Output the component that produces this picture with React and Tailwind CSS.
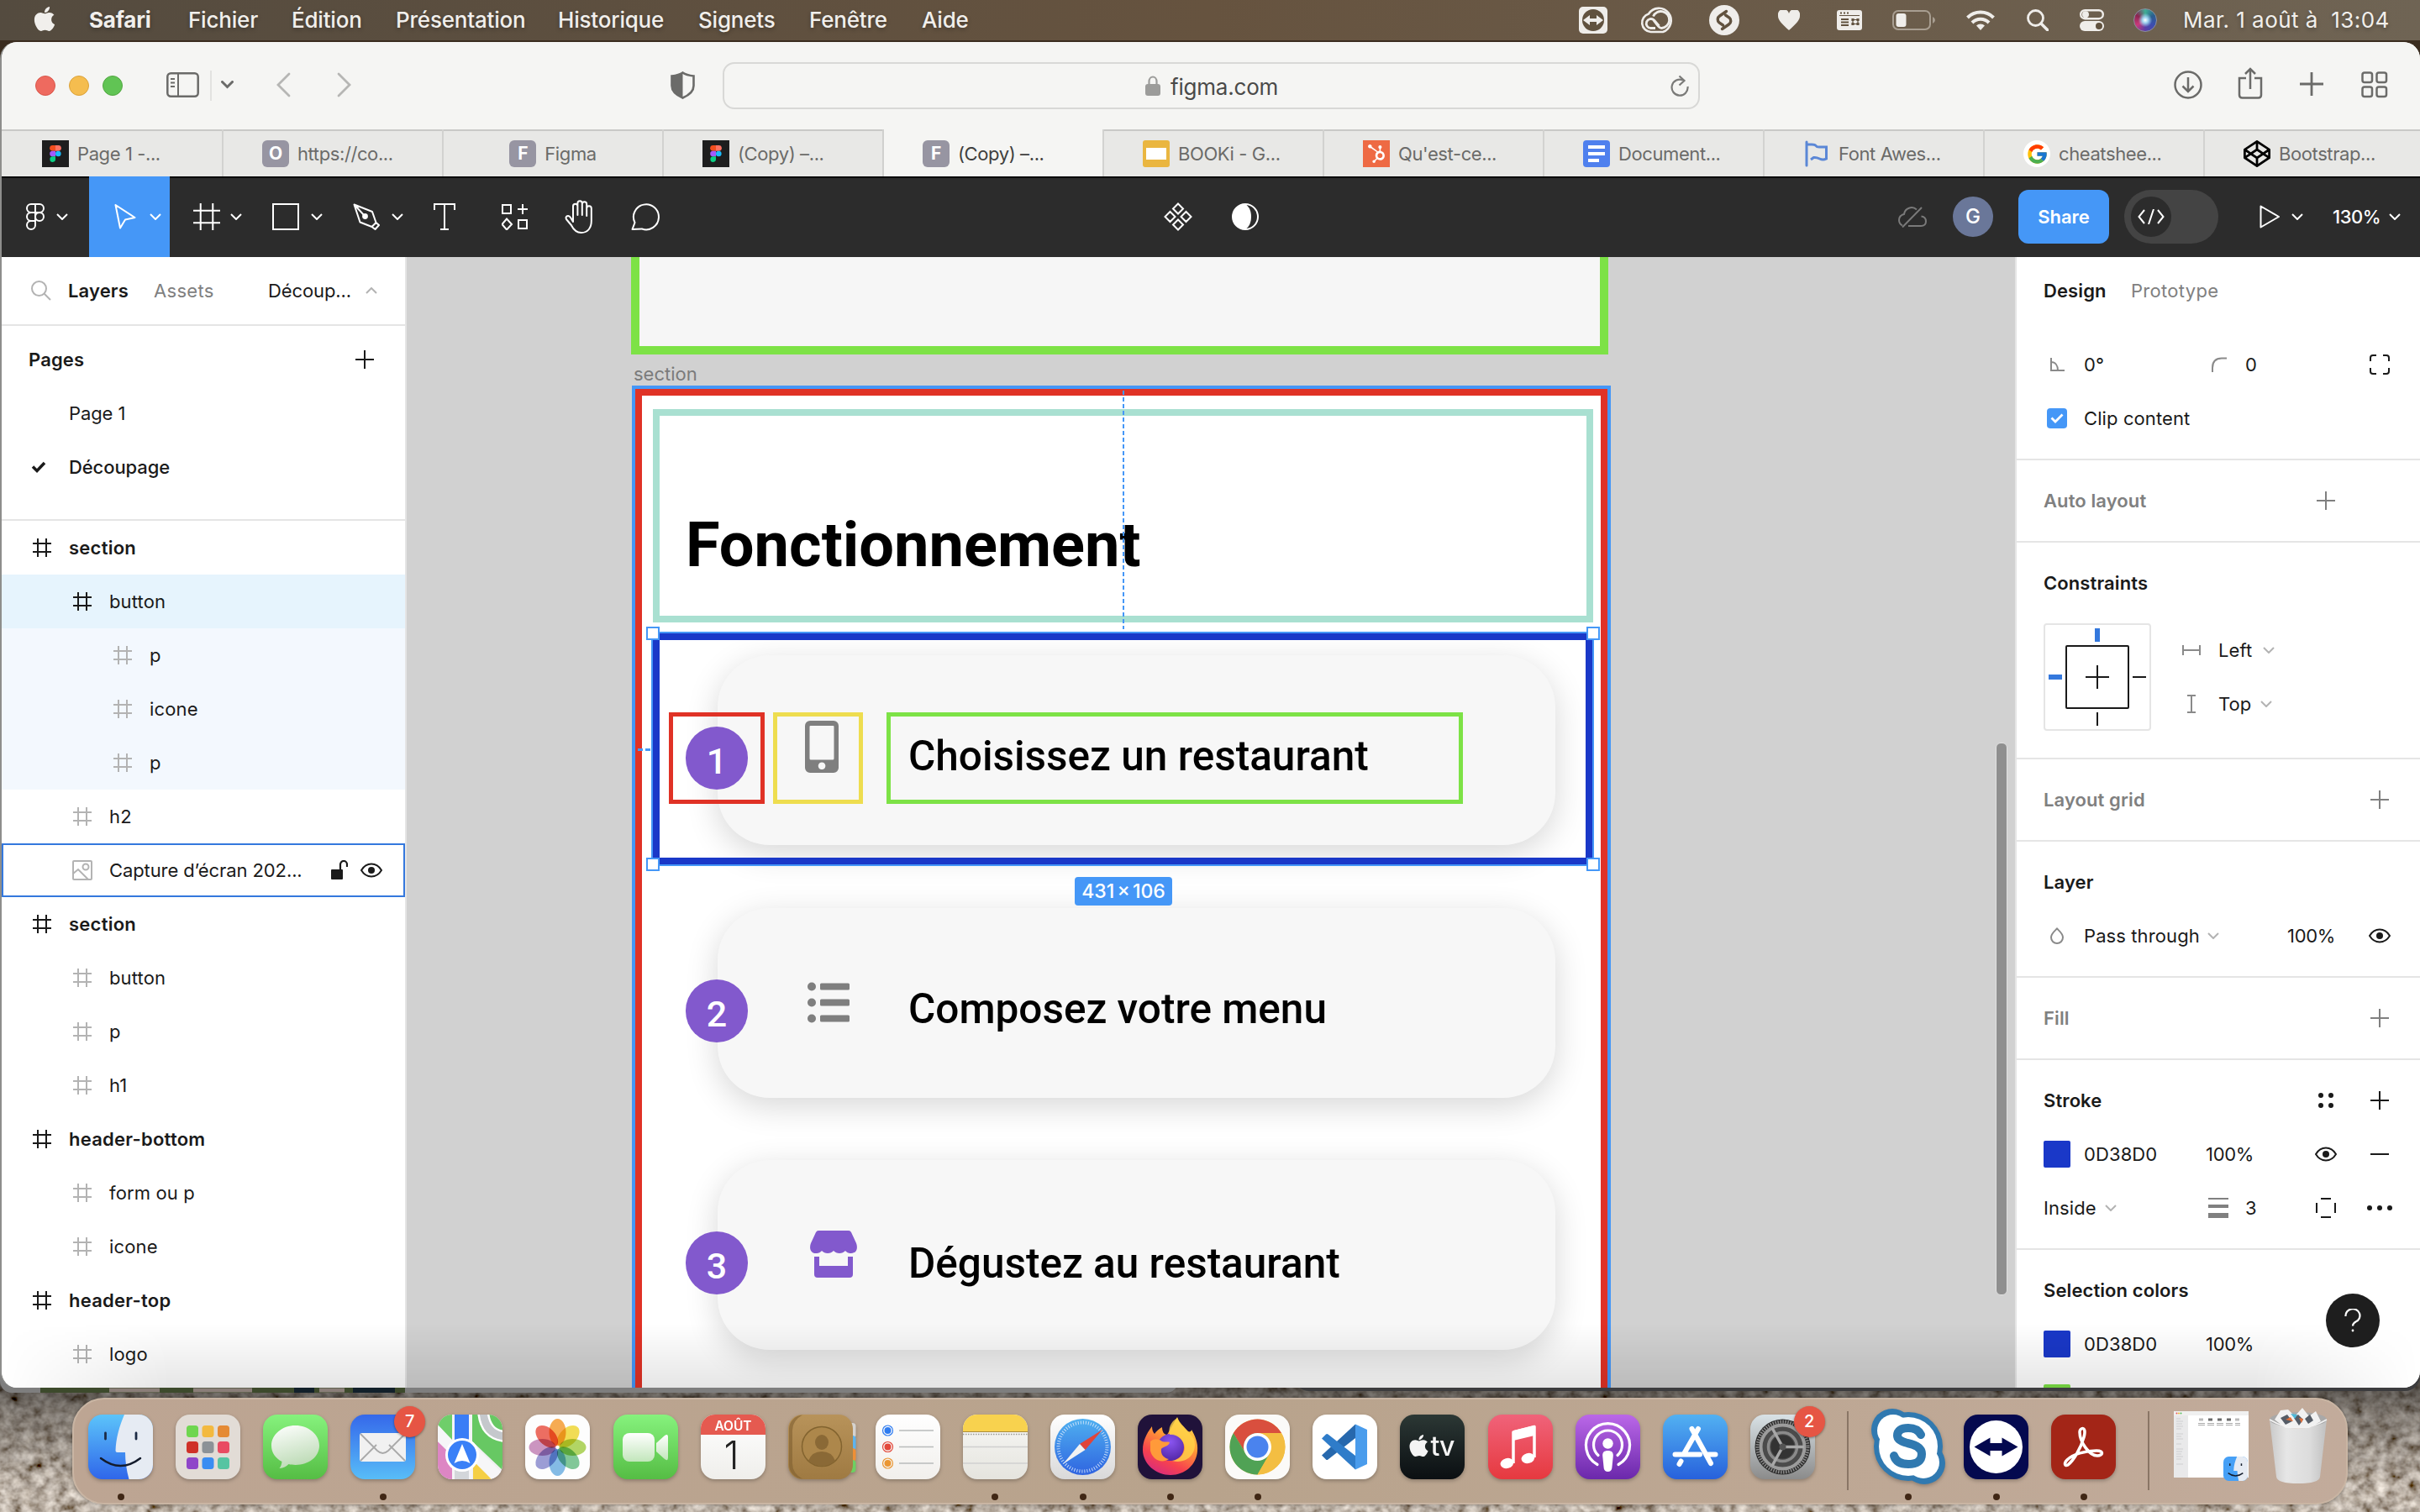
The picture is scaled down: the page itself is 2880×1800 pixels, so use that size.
import React from "react";
import { FaApple, FaCodepen, FaHubspot } from "react-icons/fa";
import { FcGoogle } from "react-icons/fc";

/* ---------- small shared glyphs ---------- */

const Chevron = ({ className = "", color = "#fff", up = false, w = 14 }) => (
  <svg width={w} height="8" viewBox="0 0 14 8" fill="none" className={`shrink-0 ${className}`}>
    <path d={up ? "M1 7l6-6 6 6" : "M1 1l6 6 6-6"} stroke={color} strokeWidth="2" />
  </svg>
);

const Plus = ({ color = "#1a1a1a", className = "" }) => (
  <svg width="22" height="22" viewBox="0 0 22 22" className={`shrink-0 ${className}`}>
    <path d="M11 0v22M0 11h22" stroke={color} strokeWidth="2" />
  </svg>
);

const Eye = ({ className = "" }) => (
  <svg width="26" height="18" viewBox="0 0 26 18" fill="none" className={`shrink-0 ${className}`}>
    <path d="M1 9C4 4 8 1.500 13 1.500S22 4 25 9c-3 5-7 7.500-12 7.500S4 14 1 9z" stroke="#1a1a1a" strokeWidth="2" />
    <circle cx="13" cy="9" r="4" fill="#1a1a1a" />
  </svg>
);

const FrameIcon = ({ color, size = 22, className = "" }) => (
  <svg width={size} height={size} viewBox="0 0 22 22" className={`shrink-0 ${className}`}>
    <path d="M6 0v22M16 0v22M0 6h22M0 16h22" stroke={color} strokeWidth="2" />
  </svg>
);

/* ---------- macOS menu bar ---------- */

const menus = [
  ["Fichier", "w-[123px]"],
  ["Édition", "w-[124px]"],
  ["Présentation", "w-[193px]"],
  ["Historique", "w-[167px]"],
  ["Signets", "w-[132px]"],
  ["Fenêtre", "w-[134px]"],
  ["Aide", "w-[80px]"],
];

function MenuBar() {
  return (
    <div className="flex h-[48px] items-center bg-linear-to-r from-[#544b3f] via-[#66533f] to-[#6f6454] text-[26px] font-medium tracking-[-0.2px] text-[#f1efec] [text-shadow:0_2px_5px_rgba(0,0,0,0.3)] [&>*]:shrink-0">
      <FaApple className="ml-[38px] mb-[4px] h-[33px] w-[30px]" />
      <span className="ml-[38px] -mt-[2px] w-[118px] font-bold">Safari</span>
      {menus.map(([m, w]) => (
        <span key={m} className={`${w} -mt-[2px] whitespace-nowrap`}>{m}</span>
      ))}
      <div className="flex-1" />
      <svg width="34" height="34" viewBox="0 0 34 34" className="mr-[39px]">
        <rect x="0" y="1" width="34" height="32" rx="5" fill="#efedea" />
        <circle cx="17" cy="17" r="13" fill="#61523f" />
        <path d="M5 17l8-6v4h8v-4l8 6-8 6v-4h-8v4z" fill="#efedea" />
      </svg>
      <svg width="40" height="32" viewBox="0 0 40 32" className="mr-[42px]" fill="none" stroke="#efedea">
        <path d="M12.500 30A11 11 0 0 1 10 8.500 14.500 14.500 0 1 1 27 30z" strokeWidth="2.600" />
        <path d="M18 25.500h-5.500a5.500 5.500 0 1 1 4-9.500l6 7M15.500 11.500a10 10 0 1 1 10 14c-2.500 0-4-2-5.500-4l-5-6.500" strokeWidth="2.800" />
      </svg>
      <svg width="36" height="36" viewBox="0 0 36 36" className="mr-[46px]">
        <circle cx="18" cy="18" r="18" fill="#efedea" />
        <path d="M20.500 7.500l-8 5.500a5 5 0 0 0-.5 8l4.500 3M15.500 28.500l8-5.500a5 5 0 0 0 .5-8l-4.500-3" fill="none" stroke="#61523f" strokeWidth="3.400" strokeLinecap="round" />
      </svg>
      <svg width="26" height="24" viewBox="0 0 26 24" className="mr-[44px]">
        <path d="M13 24C5 17 0 12 0 7a6.500 6.500 0 0 1 13-3 6.500 6.500 0 0 1 13 3c0 5-5 10-13 17z" fill="#efedea" />
      </svg>
      <svg width="30" height="24" viewBox="0 0 30 24" className="mr-[36px]">
        <rect width="30" height="24" rx="3" fill="#efedea" />
        <path d="M4 3.500h2M8 3.500h2M12 3.500h2M5 11h9M5 14.500h9M5 18h9" stroke="#61523f" strokeWidth="1.800" />
        <path d="M3 6.500h24" stroke="#61523f" strokeWidth="1" />
        <path d="M19 11.500h6v5h-6zM18 10.500h2v2h-2zM24 10.500h2v2h-2zM18 15.500h2v2h-2zM24 15.500h2v2h-2z" fill="none" stroke="#61523f" strokeWidth="1.200" />
      </svg>
      <svg width="52" height="24" viewBox="0 0 52 24" className="mr-[36px]">
        <rect x="1" y="1" width="44" height="22" rx="6" fill="none" stroke="#a89e91" strokeWidth="2" />
        <rect x="4.500" y="4" width="12" height="16" rx="3" fill="#efedea" />
        <path d="M48 8v8q3-1.500 3-4t-3-4z" fill="#a89e91" />
      </svg>
      <svg width="34" height="24" viewBox="0 0 34 24" className="mr-[38px]" fill="none" stroke="#efedea" strokeWidth="4">
        <path d="M1.500 9a22 22 0 0 1 31 0M7 15a14 14 0 0 1 20 0" />
        <path d="M17 24l-5-5.500a7 7 0 0 1 10 0z" fill="#efedea" stroke="none" />
      </svg>
      <svg width="26" height="26" viewBox="0 0 26 26" className="mr-[37px]" fill="none" stroke="#efedea" strokeWidth="2.800">
        <circle cx="10.500" cy="10.500" r="9" />
        <path d="M17 17l8 8" strokeWidth="3.500" strokeLinecap="round" />
      </svg>
      <svg width="30" height="26" viewBox="0 0 30 26" className="mr-[34px]">
        <rect x="1.200" y="1.200" width="26.600" height="10" rx="5" fill="none" stroke="#efedea" strokeWidth="2.400" />
        <circle cx="7" cy="6.200" r="4" fill="#efedea" />
        <rect y="14" width="29" height="12" rx="6" fill="#efedea" />
        <circle cx="23" cy="20" r="4" fill="#61523f" />
      </svg>
      <span className="mr-[31px] h-[28px] w-[28px] rounded-full border border-[#8a8fa0] bg-[radial-gradient(circle_at_50%_50%,#fff_0,#9fd4f0_18%,transparent_45%),conic-gradient(#3fae95,#2b5f8f,#3b4fb0,#5a3ea8,#c93a7a,#8a2550,#3fae95)]" />
      <span className="-mt-[2px] mr-[36px] w-[246px] whitespace-pre font-normal tracking-[0.450px]">Mar. 1 août à  13:04</span>
    </div>
  );
}

/* ---------- Safari chrome ---------- */

function SafariToolbar() {
  return (
    <div className="flex h-[104px] shrink-0 items-center bg-[#f5f5f3] [&>*]:shrink-0">
      <span className="ml-[40px] h-[24px] w-[24px] rounded-full border border-[#d9574b] bg-[#ee6a5f]" />
      <span className="ml-[16px] h-[24px] w-[24px] rounded-full border border-[#dba23a] bg-[#f5bd4f]" />
      <span className="ml-[16px] h-[24px] w-[24px] rounded-full border border-[#53a742] bg-[#61c454]" />
      <svg width="39" height="30" viewBox="0 0 39 30" className="-mt-[2px] ml-[52px]" fill="none" stroke="#6b6b69" strokeWidth="2.500">
        <rect x="1.300" y="1.300" width="36.400" height="27.400" rx="4" />
        <path d="M14 1v28M5 8h5M5 12.500h5M5 17h5" strokeWidth="2" />
      </svg>
      <span className="ml-[13px] h-[36px] w-[2px] bg-[#e2e2e0]" />
      <svg width="15" height="10" viewBox="0 0 15 10" className="-mt-[2px] ml-[11px]" fill="none"><path d="M1.500 1.500l6 6 6-6" stroke="#6b6b69" strokeWidth="3" strokeLinecap="round" /></svg>
      <svg width="18" height="30" viewBox="0 0 18 30" className="-mt-[2px] ml-[50px]" fill="none"><path d="M16 2L3 15l13 13" stroke="#b6b6b4" strokeWidth="2.800" strokeLinecap="round" /></svg>
      <svg width="18" height="30" viewBox="0 0 18 30" className="-mt-[2px] ml-[55px]" fill="none"><path d="M2 2l13 13L2 28" stroke="#b6b6b4" strokeWidth="2.800" strokeLinecap="round" /></svg>
      <svg width="29" height="33" viewBox="0 0 29 33" className="-mt-[2px] ml-[379px]">
        <path d="M14.500 1.500C18 4 23 5 27.500 5.500V17c0 7-6 11.500-13 14.500C7.500 28.500 1.500 24 1.500 17V5.500C6 5 11 4 14.500 1.500z" fill="none" stroke="#6b6b69" strokeWidth="2.600" />
        <path d="M14.500 1.500C11 4 6 5 1.500 5.500V17c0 7 6 11.500 13 14.500z" fill="#6b6b69" />
      </svg>
      <div className="ml-[33px] flex h-[56px] w-[1163px] items-center rounded-[14px] border-2 border-[#d8d8d6] text-[26px] text-[#4a4a49]">
        <svg width="18" height="24" viewBox="0 0 18 24" className="ml-[501px]">
          <path d="M4.500 11V7a4.500 5.500 0 0 1 9 0v4" fill="none" stroke="#9c9c9a" strokeWidth="2.200" />
          <rect y="10" width="18" height="14" rx="3" fill="#9c9c9a" />
        </svg>
        <span className="ml-[12px] mt-[2px] flex-1 tracking-[-0.2px]">figma.com</span>
        <svg width="22" height="26" viewBox="0 0 22 26" className="mr-[11px]" fill="none" stroke="#7a7a78" strokeWidth="2.200">
          <path d="M15 6.500A9.500 9.500 0 1 0 20.500 14" />
          <path d="M10.500 1.500l6 5.500-6 5.500" />
        </svg>
      </div>
      <svg width="34" height="34" viewBox="0 0 34 34" className="-mt-[2px] ml-[564px]" fill="none" stroke="#6b6b69" strokeWidth="2.500">
        <circle cx="17" cy="17" r="15.500" /><path d="M17 8v17M10.500 18.500L17 25l6.500-6.500" />
      </svg>
      <svg width="30" height="38" viewBox="0 0 30 38" className="-mt-[6px] ml-[42px]" fill="none" stroke="#6b6b69" strokeWidth="2.500">
        <path d="M10 13H2v20q0 3.500 3.500 3.500h19Q28 36.500 28 33V13h-8M15 26V2M9 8l6-6 6 6" />
      </svg>
      <svg width="28" height="28" viewBox="0 0 28 28" className="-mt-[4px] ml-[44px]" stroke="#6b6b69" strokeWidth="2.800"><path d="M14 0v28M0 14h28" /></svg>
      <svg width="32" height="32" viewBox="0 0 32 32" className="-mt-[2px] ml-[45px]" fill="none" stroke="#6b6b69" strokeWidth="2.500">
        <rect x="1.500" y="1.500" width="11.500" height="11.500" rx="2.500" /><rect x="18.500" y="1.500" width="11.500" height="11.500" rx="2.500" />
        <rect x="1.500" y="18.500" width="11.500" height="11.500" rx="2.500" /><rect x="18.500" y="18.500" width="11.500" height="11.500" rx="2.500" />
      </svg>
    </div>
  );
}

const FigmaFavicon = () => (
  <svg width="32" height="32" viewBox="0 0 32 32" className="shrink-0">
    <rect width="32" height="32" fill="#1e1e1e" />
    <path d="M16 6h-3.500a3.300 3.300 0 0 0 0 6.700H16z" fill="#f24e1e" />
    <path d="M16 6h3.500a3.300 3.300 0 0 1 0 6.700H16z" fill="#ff7262" />
    <path d="M16 12.700h-3.500a3.300 3.300 0 0 0 0 6.600H16z" fill="#a259ff" />
    <circle cx="19.300" cy="16" r="3.300" fill="#1abcfe" />
    <path d="M16 19.300h-3.500a3.300 3.300 0 1 0 3.500 3.300z" fill="#0acf83" />
  </svg>
);
const LetterFavicon = ({ children }) => (
  <span className="flex h-[32px] w-[32px] shrink-0 items-center justify-center rounded-[6px] bg-[#9795a2] text-[21px] font-bold text-white">{children}</span>
);
const SlidesFavicon = () => (
  <svg width="32" height="32" viewBox="0 0 32 32" className="shrink-0"><rect width="32" height="32" rx="3" fill="#eab640" /><rect x="4" y="9" width="24" height="14" fill="#fff" /></svg>
);
const DocsFavicon = () => (
  <svg width="32" height="32" viewBox="0 0 32 32" className="shrink-0"><rect width="32" height="32" rx="4" fill="#4f80ee" /><path d="M6 8h20M6 16h20M6 24h13" stroke="#fff" strokeWidth="4" /></svg>
);
const FlagFavicon = () => (
  <svg width="32" height="32" viewBox="0 0 32 32" className="shrink-0" fill="none" stroke="#5b87d6" strokeWidth="3">
    <path d="M4 2v28" strokeLinecap="round" /><path d="M4 5h6q4 0 5 1.500T19 8h8.500v14q-4 2-8 0t-7-1.500L9 23" />
  </svg>
);

const tabs = [
  { t: "Page 1 -...", i: <FigmaFavicon /> },
  { t: "https://co...", i: <LetterFavicon>O</LetterFavicon> },
  { t: "Figma", i: <LetterFavicon>F</LetterFavicon>, center: true },
  { t: "(Copy) –...", i: <FigmaFavicon /> },
  { t: "(Copy) –...", i: <LetterFavicon>F</LetterFavicon>, active: true },
  { t: "BOOKi - G...", i: <SlidesFavicon /> },
  { t: "Qu'est-ce...", i: <span className="flex h-[32px] w-[32px] shrink-0 items-center justify-center bg-[#ee6a44]"><FaHubspot className="h-[22px] w-[22px] text-white" /></span> },
  { t: "Document...", i: <DocsFavicon /> },
  { t: "Font Awes...", i: <FlagFavicon /> },
  { t: "cheatshee...", i: <span className="flex h-[32px] w-[32px] shrink-0 items-center justify-center rounded-full bg-white"><FcGoogle className="h-[27px] w-[27px]" /></span> },
  { t: "Bootstrap...", i: <FaCodepen className="h-[32px] w-[32px] shrink-0 text-black" /> },
];

function TabBar() {
  return (
    <div className="-mr-[4px] grid h-[56px] shrink-0 grid-cols-11 bg-[#e8e8e6] text-[22px] tracking-[-0.4px] text-[#6b6b69]">
      {tabs.map((tab, i) => (
        <div
          key={i}
          className={`flex min-w-0 items-center gap-[10px] border-l-2 pt-[2px] ${tab.center ? "justify-center" : "pl-[46px] first:pl-[48px]"} ${
            tab.active ? "border-[#d0d0ce] bg-[#f5f5f3] text-[#3f3f3e]" : "border-[#d2d2d0] shadow-[inset_0_2px_0_#c9c9c7] first:border-l-0"
          }`}
        >
          {tab.i}
          <span className="whitespace-nowrap">{tab.t}</span>
        </div>
      ))}
    </div>
  );
}

/* ---------- Figma toolbar ---------- */

const S = ({ w, h, children, className = "", sw = 2 }) => (
  <svg width={w} height={h} viewBox={`0 0 ${w} ${h}`} fill="none" stroke="#fff" strokeWidth={sw} className={`shrink-0 ${className}`}>{children}</svg>
);

function FigmaToolbar() {
  return (
    <div className="flex h-[96px] shrink-0 items-center bg-[#2c2c2c] text-[22px] text-white shadow-[inset_0_2px_0_#000]">
      <S w={24} h={32} className="ml-[28px]">
        <path d="M12 1H7a5 5 0 0 0 0 10h10a5 5 0 0 0 0-10h-5zM12 1v25M12 11H7a5 5 0 0 0 0 10h5M12 21H7a5 5 0 1 0 5 5z" /><circle cx="17" cy="16" r="5" />
      </S>
      <Chevron className="ml-[13px]" />
      <div className="ml-[25px] flex h-[96px] w-[96px] shrink-0 items-center bg-[#4597f7]">
        <S w={27} h={32} className="ml-[30px]"><path d="M1.500 2l23 15-11.500 2.500L7 29.500z" strokeLinejoin="round" /></S>
        <Chevron className="ml-[15px]" />
      </div>
      <FrameIcon color="#fff" size={32} className="ml-[28px] [&_path]:[stroke-width:1.400]" />
      <Chevron className="ml-[12px]" />
      <S w={32} h={32} className="ml-[36px]"><rect x="1" y="1" width="30" height="30" /></S>
      <Chevron className="ml-[14px]" />
      <S w={32} h={32} className="ml-[36px]">
        <path d="M1.500 1.500l7 21 14 5.500 5-5-4.500-13zM1.500 1.500l12 13M22.500 28l4 3 4.500-5-3.500-3" strokeLinejoin="round" /><circle cx="14.500" cy="15.500" r="2.400" fill="#fff" />
      </S>
      <Chevron className="ml-[14px]" />
      <S w={26} h={32} className="ml-[36px]"><path d="M1 8V1h24v7M13 1v30M8 31h10" /></S>
      <S w={32} h={32} className="ml-[55px]">
        <rect x="1" y="2" width="10" height="10" /><rect x="20" y="20" width="10" height="10" /><path d="M25 1v12M19 7h12M6 18.500l6 6.500-6 6.500L0.500 25z" />
      </S>
      <S w={36} h={40} className="ml-[43px]">
        <path d="M10 22V7.500a2.700 2.700 0 0 1 5.400 0V18 4a2.700 2.700 0 0 1 5.400 0v14V5a2.700 2.700 0 0 1 5.400 0v14V10a2.700 2.700 0 0 1 5.600 0v15c0 8-4 14-12 14-7 0-10-5-12-9L2 23c-2-4 3-5.500 5-2l3 5z" strokeLinejoin="round" />
      </S>
      <S w={36} h={33} className="ml-[43px]"><path d="M1.500 31l3-8A15 15 0 1 1 13 30.500z" strokeLinejoin="round" /></S>
      <S w={34} h={34} className="ml-[598px]">
        <path d="M17 1.500l6 6-6 6-6-6zM17 20.500l6 6-6 6-6-6zM7.500 11l6 6-6 6-6-6zM26.500 11l6 6-6 6-6-6z" />
      </S>
      <S w={32} h={32} className="ml-[47px]"><circle cx="16" cy="16" r="15" /><path d="M16 1a15 15 0 0 0 0 30c5-3 7-9 7-15s-2-12-7-15z" fill="#fff" stroke="none" /></S>
      <div className="flex-1" />
      <svg width="34" height="26" viewBox="0 0 34 26" fill="none" stroke="#7a7a7a" strokeWidth="2" className="shrink-0">
        <path d="M22 4.500A9 9 0 0 0 7 10C3 11 1 13.500 1 17c0 2.500 1.500 5 4 6.500M12 24h15c4 0 6-2.500 6-5.500S31 13 27.500 12.500M5 25.500L28 2" />
      </svg>
      <span className="ml-[31px] flex h-[48px] w-[48px] shrink-0 items-center justify-center rounded-full bg-[#6a7799] text-[24px] font-medium">G</span>
      <span className="ml-[30px] flex h-[64px] w-[108px] shrink-0 items-center justify-center rounded-[12px] bg-[#4597f7] font-semibold">Share</span>
      <span className="ml-[18px] flex h-[64px] w-[112px] shrink-0 items-center rounded-full bg-[#444]">
        <span className="ml-[8px] flex h-[48px] w-[48px] items-center justify-center rounded-full bg-[#2c2c2c]">
          <S w={32} h={18}><path d="M8 1L1.500 9 8 17M24 1l6.500 8L24 17M19 0l-6 18" /></S>
        </span>
      </span>
      <S w={25} h={28} className="ml-[49px]"><path d="M1.500 1.500L23 14 1.500 26.500z" strokeLinejoin="round" /></S>
      <Chevron className="ml-[13px]" />
      <span className="ml-[35px] w-[58px] shrink-0 font-medium tracking-[-0.5px]">130%</span>
      <Chevron className="ml-[9px] mr-[23px]" />
    </div>
  );
}

/* ---------- layers panel ---------- */

const layers = [
  { n: "section", d: 0 },
  { n: "button", d: 1, dark: true, bg: "bg-[#e6f4fd]" },
  { n: "p", d: 2, bg: "bg-[#f3f8fe]" },
  { n: "icone", d: 2, bg: "bg-[#f3f8fe]" },
  { n: "p", d: 2, bg: "bg-[#f3f8fe]" },
  { n: "h2", d: 1 },
  { n: "Capture d’écran 202...", d: 1, hover: true },
  { n: "section", d: 0 },
  { n: "button", d: 1 },
  { n: "p", d: 1 },
  { n: "h1", d: 1 },
  { n: "header-bottom", d: 0 },
  { n: "form ou p", d: 1 },
  { n: "icone", d: 1 },
  { n: "header-top", d: 0 },
  { n: "logo", d: 1 },
];
const indent = ["pl-[37px]", "pl-[85px]", "pl-[133px]"];

function LeftPanel() {
  return (
    <div className="flex w-[482px] shrink-0 flex-col overflow-hidden border-r-2 border-[#e5e5e5] bg-white text-[22px] tracking-[0.15px] text-[#1a1a1a]">
      <div className="flex h-[82px] shrink-0 items-center border-b-2 border-[#e5e5e5]">
        <svg width="24" height="24" viewBox="0 0 24 24" fill="none" stroke="#b3b3b3" strokeWidth="2" className="ml-[35px]"><circle cx="9.500" cy="9.500" r="8.500" /><path d="M15.500 15.500l7.500 7.500" /></svg>
        <span className="ml-[20px] w-[102px] font-semibold">Layers</span>
        <span className="w-[136px] tracking-[0.3px] text-[#808080]">Assets</span>
        <span className="tracking-[-0.1px]">Découp...</span>
        <Chevron up color="#b3b3b3" className="ml-[17px]" />
      </div>
      <div className="flex h-[232px] shrink-0 flex-col border-b-2 border-[#e5e5e5] pt-[8px]">
        <div className="flex h-[64px] items-center justify-between pl-[32px] pr-[37px]">
          <span className="font-semibold">Pages</span>
          <Plus />
        </div>
        <div className="flex h-[64px] items-center pl-[80px] tracking-[-0.1px]">Page 1</div>
        <div className="flex h-[64px] items-center pl-[35px]">
          <svg width="18" height="14" viewBox="0 0 18 14" fill="none" stroke="#1a1a1a" strokeWidth="3.500"><path d="M2 6.500l5 5L16 2" /></svg>
          <span className="ml-[27px] font-medium tracking-[-0.1px]">Découpage</span>
        </div>
      </div>
      {layers.map((l, i) => (
        <div
          key={i}
          className={`flex h-[64px] shrink-0 items-center ${indent[l.d]} ${l.bg || ""} ${l.d === 0 ? "font-semibold tracking-[0.25px]" : ""} ${l.hover ? "tracking-[-0.1px] shadow-[inset_0_0_0_2px_#3478dd]" : ""}`}
        >
          {l.hover ? (
            <svg width="24" height="24" viewBox="0 0 24 24" fill="none" stroke="#b3b3b3" strokeWidth="2" className="-ml-px mr-[20px] shrink-0"><rect x="1" y="1" width="22" height="22" rx="1" /><circle cx="16" cy="8" r="3.500" /><path d="M1 16l6-5 12 12" /></svg>
          ) : (
            <FrameIcon color={l.d === 0 || l.dark ? "#1a1a1a" : "#b3b3b3"} className="mr-[21px]" />
          )}
          <span className="whitespace-nowrap">{l.n}</span>
          {l.hover && (
            <>
              <svg width="20" height="24" viewBox="0 0 20 24" className="ml-[34px] shrink-0"><rect y="11" width="14" height="12" rx="1" fill="#1a1a1a" /><path d="M11 11V5a4 4 0 0 1 8 0v3" fill="none" stroke="#1a1a1a" strokeWidth="2.200" /></svg>
              <Eye className="ml-[15px]" />
            </>
          )}
        </div>
      ))}
    </div>
  );
}

/* ---------- canvas ---------- */

const Box = ({ className }) => <div className={`absolute ${className}`} />;

function Canvas() {
  return (
    <div className="relative flex-1 overflow-hidden bg-[#d1d1d1]">
      {/* page-space layer: origin equals the screen's top-left corner */}
      <div className="absolute -left-[484px] -top-[306px] h-[1800px] w-[2880px]">
        <Box className="left-[751px] top-[200px] h-[222px] w-[1163px] border-[10px] border-[#7de246] bg-[#f6f6f6]" />
        <span className="absolute left-[754px] top-[431px] text-[22px] leading-[28px] text-[#7b7b7b]">section</span>
        <Box className="left-[752px] top-[459px] h-[1400px] w-[1165px] border-4 border-[#4597f7] bg-white" />
        <Box className="left-[756px] top-[463px] h-[1400px] w-[1157px] border-8 border-[#e03226] bg-white" />

        {/* cards */}
        <Box className="left-[854px] top-[780px] h-[226px] w-[997px] rounded-[62px] bg-[#f7f7f7] shadow-[0_10px_38px_rgba(0,0,0,0.16)]" />
        <Box className="left-[854px] top-[1081px] h-[226px] w-[997px] rounded-[62px] bg-[#f7f7f7] shadow-[0_10px_38px_rgba(0,0,0,0.16)]" />
        <Box className="left-[854px] top-[1381px] h-[226px] w-[997px] rounded-[62px] bg-[#f7f7f7] shadow-[0_10px_38px_rgba(0,0,0,0.16)]" />

        <Box className="left-[777px] top-[487px] h-[254px] w-[1119px] border-8 border-[#a9e0d1]" />
        <span className="absolute left-[816px] top-[609px] font-['Roboto',sans-serif] text-[74px] font-bold leading-[80px] text-black">Fonctionnement</span>
        <Box className="left-[1336px] top-[465px] h-[284px] w-[2px] bg-[repeating-linear-gradient(to_bottom,#4597f7_0_5px,transparent_5px_8px)]" />

        {/* selected frame */}
        <Box className="left-[775px] top-[752px] h-[279px] w-[1122px] border-2 border-[#4597f7]" />
        <Box className="left-[777px] top-[754px] h-[275px] w-[1118px] border-8 border-[#1a38c8]" />
        <Box className="left-[759px] top-[891px] h-[3px] w-[15px] bg-[repeating-linear-gradient(to_right,#4597f7_0_6px,transparent_6px_9px)]" />
        <Box className="left-[769px] top-[746px] h-[16px] w-[16px] border-2 border-[#4597f7] bg-white" />
        <Box className="left-[1888px] top-[746px] h-[16px] w-[16px] border-2 border-[#4597f7] bg-white" />
        <Box className="left-[769px] top-[1021px] h-[16px] w-[16px] border-2 border-[#4597f7] bg-white" />
        <Box className="left-[1888px] top-[1021px] h-[16px] w-[16px] border-2 border-[#4597f7] bg-white" />

        <span className="absolute left-[1279px] top-[1044px] flex h-[34px] w-[116px] items-center justify-center whitespace-nowrap rounded-[4px] bg-[#4597f7] text-[23px] font-medium text-white [word-spacing:-3px]">431 × 106</span>

        {/* row 1 */}
        <span className="absolute left-[816px] top-[865px] flex h-[75px] w-[74px] items-center justify-center rounded-full bg-[#8259cd] pt-[7px] font-['Roboto',sans-serif] text-[43px] font-medium text-white">1</span>
        <Box className="left-[796px] top-[848px] h-[109px] w-[114px] border-[5px] border-[#e03226]" />
        <Box className="left-[920px] top-[848px] h-[109px] w-[107px] border-[5px] border-[#eedd4f]" />
        <Box className="left-[1055px] top-[848px] h-[109px] w-[686px] border-[5px] border-[#7de246]" />
        <svg width="40" height="62" viewBox="0 0 40 62" className="absolute left-[958px] top-[858px]">
          <path fillRule="evenodd" d="M6 0h28a6 6 0 0 1 6 6v50a6 6 0 0 1-6 6H6a6 6 0 0 1-6-6V6a6 6 0 0 1 6-6zM6.500 6q-1 0-1 1v38q0 1.500 1.500 1.500h26q1.500 0 1.500-1.500V7q0-1-1-1zM20 49.500a4.300 4.300 0 1 0 .1 0z" fill="#7f7f7f" />
        </svg>
        <span className="absolute left-[1081px] top-[870px] whitespace-nowrap font-['Roboto',sans-serif] text-[49.500px] font-medium leading-[60px] text-black">Choisissez un restaurant</span>

        {/* row 2 */}
        <span className="absolute left-[816px] top-[1166px] flex h-[75px] w-[74px] items-center justify-center rounded-full bg-[#8259cd] pt-[7px] font-['Roboto',sans-serif] text-[43px] font-medium text-white">2</span>
        <svg width="52" height="52" viewBox="0 0 52 52" className="absolute left-[961px] top-[1168px]" fill="#7f7f7f">
          <circle cx="5" cy="6.500" r="5" /><circle cx="5" cy="25.500" r="5" /><circle cx="5" cy="44.500" r="5" />
          <rect x="15" y="2.500" width="35" height="8" rx="1.500" /><rect x="15" y="21.500" width="35" height="8" rx="1.500" /><rect x="15" y="40.500" width="35" height="8" rx="1.500" />
        </svg>
        <span className="absolute left-[1081px] top-[1171px] whitespace-nowrap font-['Roboto',sans-serif] text-[49.500px] font-medium leading-[60px] text-black">Composez votre menu</span>

        {/* row 3 */}
        <span className="absolute left-[816px] top-[1466px] flex h-[75px] w-[74px] items-center justify-center rounded-full bg-[#8259cd] pt-[7px] font-['Roboto',sans-serif] text-[43px] font-medium text-white">3</span>
        <svg width="58" height="56" viewBox="0 0 58 56" className="absolute left-[963px] top-[1465px]" fill="#8259cd">
          <path d="M8 2q1-2 3-2h36q2 0 3 2l6 13c2 5 1 12-6 12-4 0-5-1-7-3-2 2-4 3-7 3s-5-1-7-3c-2 2-4 3-7 3s-5-1-7-3c-2 2-3 3-7 3-7 0-8-7-6-12z" />
          <path d="M6 31h6v11h34V31h6v21q0 4-4 4H10q-4 0-4-4z" />
        </svg>
        <span className="absolute left-[1081px] top-[1474px] whitespace-nowrap font-['Roboto',sans-serif] text-[49.500px] font-medium leading-[60px] text-black">Dégustez au restaurant</span>

        <Box className="left-[2375px] top-[884px] h-[658px] w-[14px] rounded-[6px] border border-[#e2e2e2] bg-[#8f8f8f]" />
      </div>
    </div>
  );
}

/* ---------- design panel ---------- */

const Section = ({ children }) => <div className="shrink-0 border-t-2 border-[#e5e5e5] py-[16px]">{children}</div>;
const Row = ({ children, className = "" }) => <div className={`flex h-[64px] items-center pl-[32px] ${className}`}>{children}</div>;
const Swatch = ({ className }) => <span className={`h-[32px] w-[32px] shrink-0 rounded-[2px] ${className}`} />;

function RightPanel() {
  return (
    <div className="w-[482px] shrink-0 overflow-hidden border-l-2 border-[#e5e5e5] bg-white text-[22px] tracking-[0.1px] text-[#1a1a1a]">
      <div className="flex h-[80px] items-center pl-[32px]">
        <span className="w-[104px] font-semibold">Design</span>
        <span className="tracking-[0.3px] text-[#808080]">Prototype</span>
      </div>
      <div className="py-[16px]">
        <Row>
          <svg width="18" height="18" viewBox="0 0 18 18" fill="none" stroke="#8a8a8a" strokeWidth="2" className="ml-[7px]"><path d="M2 1v15h16M2 6c5 0 8 4 8 10" /></svg>
          <span className="ml-[23px] w-[152px]">0°</span>
          <svg width="18" height="18" viewBox="0 0 18 18" fill="none" stroke="#8a8a8a" strokeWidth="2"><path d="M1 18v-5Q1 1.500 12 1.500h6" /></svg>
          <span className="ml-[22px] w-[148px]">0</span>
          <svg width="24" height="24" viewBox="0 0 24 24" fill="none" stroke="#1a1a1a" strokeWidth="2"><path d="M1 8V4q0-3 3-3h4M16 1h4q3 0 3 3v4M23 16v4q0 3-3 3h-4M8 23H4q-3 0-3-3v-4" /></svg>
        </Row>
        <Row>
          <span className="ml-[4px] flex h-[24px] w-[24px] items-center justify-center rounded-[4px] bg-[#4597f7]">
            <svg width="16" height="12" viewBox="0 0 16 12" fill="none" stroke="#fff" strokeWidth="2.800"><path d="M1.500 5.500l4.500 4.500L14.500 1.500" /></svg>
          </span>
          <span className="ml-[20px]">Clip content</span>
        </Row>
      </div>
      <Section>
        <Row>
          <span className="w-[325px] font-semibold text-[#808080]">Auto layout</span>
          <Plus color="#808080" />
        </Row>
      </Section>
      <Section>
        <Row><span className="font-semibold">Constraints</span></Row>
        <div className="mt-[16px] flex h-[144px] pl-[32px]">
          <svg width="128" height="128" viewBox="0 0 128 128" fill="none">
            <rect x="1" y="1" width="126" height="126" rx="3" stroke="#e5e5e5" strokeWidth="2" />
            <rect x="27" y="27" width="74" height="74" rx="1" stroke="#1a1a1a" strokeWidth="2" />
            <path d="M64 50v28M50 64h28M106 64h16M64 106v16" stroke="#1a1a1a" strokeWidth="2" />
            <path d="M64 6v16M6 64h16" stroke="#3478dd" strokeWidth="6" />
          </svg>
          <div className="ml-[37px] flex flex-col">
            <div className="flex h-[64px] items-center">
              <svg width="22" height="12" viewBox="0 0 22 12" stroke="#8a8a8a" strokeWidth="2"><path d="M1 0v12M21 0v12M1 6h20" /></svg>
              <span className="ml-[21px]">Left</span>
              <Chevron color="#b3b3b3" className="ml-[13px]" />
            </div>
            <div className="flex h-[64px] items-center">
              <svg width="22" height="22" viewBox="0 0 22 22" stroke="#8a8a8a" strokeWidth="2"><path d="M6 1h10M6 21h10M11 1v20" /></svg>
              <span className="ml-[21px]">Top</span>
              <Chevron color="#b3b3b3" className="ml-[11px]" />
            </div>
          </div>
        </div>
      </Section>
      <Section>
        <Row>
          <span className="w-[389px] font-semibold text-[#808080]">Layout grid</span>
          <Plus color="#808080" />
        </Row>
      </Section>
      <Section>
        <Row><span className="font-semibold">Layer</span></Row>
        <Row>
          <svg width="16" height="20" viewBox="0 0 16 20" fill="none" stroke="#8a8a8a" strokeWidth="2" className="ml-[8px]"><path d="M8 1.500c3 3 7 6 7 10.500a7 7 0 0 1-14 0C1 7.500 5 4.500 8 1.500z" /></svg>
          <span className="ml-[24px] w-[147px]">Pass through</span>
          <Chevron color="#b3b3b3" />
          <span className="ml-[81px] w-[97px] tracking-[-0.3px]">100%</span>
          <Eye />
        </Row>
      </Section>
      <Section>
        <Row>
          <span className="w-[389px] font-semibold text-[#808080]">Fill</span>
          <Plus color="#808080" />
        </Row>
      </Section>
      <Section>
        <Row>
          <span className="w-[327px] font-semibold">Stroke</span>
          <svg width="18" height="18" viewBox="0 0 18 18" fill="#1a1a1a"><circle cx="3" cy="3" r="3" /><circle cx="15" cy="3" r="3" /><circle cx="3" cy="15" r="3" /><circle cx="15" cy="15" r="3" /></svg>
          <Plus className="ml-[44px]" />
        </Row>
        <Row>
          <Swatch className="bg-[#1a38c8]" />
          <span className="ml-[16px] w-[145px]">0D38D0</span>
          <span className="w-[130px] tracking-[-0.3px]">100%</span>
          <Eye />
          <span className="ml-[40px] h-[2px] w-[22px] bg-[#1a1a1a]" />
        </Row>
        <Row>
          <span className="w-[73px]">Inside</span>
          <Chevron color="#b3b3b3" />
          <svg width="24" height="24" viewBox="0 0 24 24" className="ml-[109px]" fill="#808080"><rect width="24" height="2" /><rect y="8" width="24" height="4" /><rect y="18" width="24" height="6" /></svg>
          <span className="ml-[20px] w-[84px]">3</span>
          <svg width="24" height="24" viewBox="0 0 24 24" stroke="#1a1a1a" strokeWidth="2"><path d="M6 1h12M6 23h12M1 6v12M23 6v12" /></svg>
          <svg width="30" height="6" viewBox="0 0 30 6" fill="#1a1a1a" className="ml-[37px]"><circle cx="3" cy="3" r="3" /><circle cx="15" cy="3" r="3" /><circle cx="27" cy="3" r="3" /></svg>
        </Row>
      </Section>
      <Section>
        <Row><span className="font-semibold">Selection colors</span></Row>
        <Row>
          <Swatch className="bg-[#1a38c8]" />
          <span className="ml-[16px] w-[145px]">0D38D0</span>
          <span className="tracking-[-0.3px]">100%</span>
        </Row>
        <Row><Swatch className="bg-[#7de246]" /></Row>
      </Section>
    </div>
  );
}

/* ---------- dock ---------- */

const Icon = ({ children, bg, id, from, to }) => (
  <svg width="77" height="77" viewBox="0 0 77 77" className="shrink-0 drop-shadow-[0_2px_2px_rgba(0,0,0,0.25)]">
    <defs>
      <linearGradient id={`bg-${id}`} x1="0" y1="0" x2="0" y2="1">
        <stop offset="0" stopColor={from || bg} /><stop offset="1" stopColor={to || bg} />
      </linearGradient>
      <clipPath id={`clip-${id}`}><rect width="77" height="77" rx="17" /></clipPath>
    </defs>
    <rect width="77" height="77" rx="17" fill={`url(#bg-${id})`} />
    <g clipPath={`url(#clip-${id})`}>{children}</g>
  </svg>
);

const FinderFace = () => (
  <>
    <path d="M43 0C37 14 33 28 32.500 43q0 2 2 2H44q0 16 4.500 32H77V0z" fill="#e6ebf3" />
    <path d="M20.500 22v7M57 22v7" stroke="#1c2b45" strokeWidth="2.800" strokeLinecap="round" />
    <path d="M15 52q23.500 18 47 0" fill="none" stroke="#141c2c" strokeWidth="2.500" strokeLinecap="round" />
  </>
);

const launch = ["#6fd64f", "#f3b93f", "#e58a34", "#cf3128", "#8c9297", "#e94b62", "#8f46c9", "#3a8df2", "#57c4a2"];
const petals = ["#f5a03a", "#f0d83c", "#a8cf4f", "#6fbf8a", "#73b2e2", "#8e8fd0", "#c486b8", "#ea5a4c"];

const Finder = ({ id = "finder" }) => <Icon id={id} from="#5cc4fa" to="#2f66ea"><FinderFace /></Icon>;

const Launchpad = () => (
  <Icon id="launch" bg="#e2dcd6">
    {launch.map((c, i) => <rect key={i} x={13 + (i % 3) * 18.500} y={13 + Math.floor(i / 3) * 19} width="14" height="14" rx="3.500" fill={c} />)}
  </Icon>
);

const Messages = () => (
  <Icon id="messages" from="#86f27d" to="#55bd44">
    <defs><linearGradient id="bubble" x1="0" y1="0" x2="0.300" y2="1"><stop offset="0" stopColor="#fff" /><stop offset="1" stopColor="#bfdcb8" /></linearGradient></defs>
    <path d="M38.500 13C23 13 10 23.500 10 37c0 8.500 5 15 12.500 19-.5 4-1.500 6-3 8 5-.5 8-2 11-5 2.500.6 5 .9 8 .9C54 60 67 50.500 67 37S54 13 38.500 13z" fill="url(#bubble)" />
  </Icon>
);

const Mail = () => (
  <Icon id="mail" from="#3568ea" to="#58bdf8">
    <rect x="11" y="22" width="55" height="34" rx="3" fill="#f1f1f1" />
    <path d="M12 55l19-19M65 55L46 36M12 23l20 20q6.500 6 13 0l20-20" fill="none" stroke="#a9a9a9" strokeWidth="1.800" />
  </Icon>
);

const Maps = () => (
  <Icon id="maps" bg="#efeff1">
    <path d="M0 0h18v34L0 14z" fill="#6fce6a" /><path d="M39 0h38v66L39 30z" fill="#67c863" />
    <path d="M0 32l17 17v28H0z" fill="#dd86c4" /><path d="M42 77V52l22 25z" fill="#f5cf45" />
    <path d="M0 12l17 18v18L0 32zM41 34l36 36v7H64L41 54z" fill="#f6f6f8" />
    <path d="M54-4q2 28 26 30" fill="none" stroke="#fff" strokeWidth="14" /><path d="M54-4q2 28 26 30" fill="none" stroke="#c5c8cc" strokeWidth="9" />
    <rect x="17" width="24" height="77" fill="#f4f4f6" /><rect x="20" width="17" height="40" fill="#3a7df6" />
    <rect x="20" y="50" width="17" height="27" fill="#d3d6da" />
    <circle cx="29" cy="48" r="20" fill="#fff" /><circle cx="29" cy="48" r="17" fill="#3a80f7" />
    <path d="M29 35l9.500 23q-9.500-6-19 0z" fill="#fff" />
  </Icon>
);

const Photos = () => (
  <Icon id="photos" bg="#fdfdfd">
    {petals.map((c, i) => (
      <ellipse key={i} cx="38.500" cy="21" rx="10" ry="16" fill={c} opacity=".88" transform={`rotate(${i * 45} 38.500 39)`} className="mix-blend-multiply" />
    ))}
  </Icon>
);

const FaceTime = () => (
  <Icon id="facetime" from="#86f27d" to="#55bd44">
    <defs><linearGradient id="cam" x1="0" y1="0" x2="0" y2="1"><stop offset="0" stopColor="#fff" /><stop offset="1" stopColor="#c2e6bb" /></linearGradient></defs>
    <rect x="11" y="22" width="38" height="34" rx="8" fill="url(#cam)" /><path d="M51 34l10-9q4-3 4 2v24q0 5-4 2l-10-9z" fill="url(#cam)" />
  </Icon>
);

const Calendar = () => (
  <Icon id="calendar" from="#ffffff" to="#efeeeb">
    <rect width="77" height="24" fill="#e55a50" />
    <text x="38.500" y="18.500" textAnchor="middle" fontFamily="Inter" fontWeight="600" fontSize="15.500" fill="#fff">AOÛT</text>
    <text x="36.500" y="65" textAnchor="middle" fontFamily="Inter" fontWeight="300" fontSize="46" fill="#222">1</text>
  </Icon>
);

const Contacts = () => (
  <svg width="82" height="77" viewBox="0 0 82 77" className="ml-[5px] shrink-0 drop-shadow-[0_2px_2px_rgba(0,0,0,0.25)]">
    <defs><linearGradient id="leather" x1="0" y1="0" x2="0" y2="1"><stop offset="0" stopColor="#b8935a" /><stop offset="1" stopColor="#9f7a42" /></linearGradient></defs>
    <rect x="60" y="10" width="20.500" height="18" rx="4" fill="#d5d3d0" /><rect x="60" y="25" width="20.500" height="18" rx="4" fill="#5db4ee" />
    <rect x="60" y="40" width="20.500" height="16" rx="4" fill="#ef8f35" /><rect x="60" y="54" width="20.500" height="15" rx="4" fill="#6dd062" />
    <rect width="77" height="77" rx="17" fill="url(#leather)" />
    <path d="M17 .5A17 17 0 0 0 1 17v43a17 17 0 0 0 16 16.500Q5 70 5 58V19Q5 7 17 .5z" fill="#7f5f30" opacity=".6" />
    <circle cx="40" cy="38" r="23.500" fill="#ad874b" stroke="#82632f" strokeWidth="1.500" />
    <ellipse cx="40" cy="33" rx="8" ry="9" fill="#8a6936" /><path d="M24 55q4-11 16-11t16 11q-7 6-16 6t-16-6z" fill="#8a6936" />
  </svg>
);

const Reminders = () => (
  <Icon id="reminders" from="#ffffff" to="#f1efec">
    {["#2f7cf0", "#e2493c", "#ea9633"].map((c, i) => (
      <g key={c}>
        <circle cx="14.500" cy={19 + i * 19.500} r="4" fill={c} /><circle cx="14.500" cy={19 + i * 19.500} r="6" fill="none" stroke={c} strokeWidth="1.200" />
        <path d={`M28 ${19 + i * 19.5}h41`} stroke="#b9bbbb" strokeWidth="1.500" />
      </g>
    ))}
  </Icon>
);

const Notes = () => (
  <Icon id="notes" from="#f8f8f6" to="#e5e4de">
    <rect width="77" height="20" fill="#f8d24e" /><path d="M0 20.500h77" stroke="#a98b3a" strokeWidth="1.200" />
    <path d="M0 23.500h77" stroke="#9a9a94" strokeWidth="1.500" strokeDasharray="1.500 1.500" />
    <path d="M0 38.500h77M0 58h77" stroke="#cfcfcf" strokeWidth="1.500" />
  </Icon>
);

const SafariIcon = () => (
  <Icon id="safari" from="#ffffff" to="#d9d9d9">
    <defs><linearGradient id="compass" x1="0" y1="0" x2="0" y2="1"><stop offset="0" stopColor="#4fb0f0" /><stop offset="1" stopColor="#2f64e0" /></linearGradient></defs>
    <circle cx="38.500" cy="38.500" r="33.500" fill="url(#compass)" />
    <circle cx="38.500" cy="38.500" r="29" fill="none" stroke="#dceafc" strokeWidth="4" strokeDasharray="1 2.040" opacity=".85" />
    <path d="M62 18L41.500 42 35 35z" fill="#e0443a" /><path d="M15 59l20-24 6.500 7z" fill="#f2f2f2" />
  </Icon>
);

const Firefox = () => (
  <Icon id="firefox" bg="#20123a">
    <defs>
      <linearGradient id="fx" x1="0.800" y1="0" x2="0.300" y2="1"><stop offset="0" stopColor="#ffe14f" /><stop offset=".4" stopColor="#ff9a35" /><stop offset=".75" stopColor="#f7424e" /><stop offset="1" stopColor="#d92c7c" /></linearGradient>
      <radialGradient id="fxg" cx=".5" cy=".3" r=".7"><stop offset="0" stopColor="#8a55f0" /><stop offset="1" stopColor="#5328a8" /></radialGradient>
    </defs>
    <path d="M47 3c3 8 8 11 13 17 2 1 4 0 4-2 4 7 8 16 7 25-1 17-15 29-32 29S6 59 6 42c0-10 4-19 11-28 0 4 1 7 3 9 2-3 5-6 9-8 0 5 2 9 6 9z" fill="url(#fx)" />
    <circle cx="39" cy="39" r="16" fill="url(#fxg)" />
    <path d="M15 32c5-4 10-3 14 0 3 1 7 0 9 1-1 5-8 5-10 8-1 6 3 11 9 12-9 6-20 0-22-10z" fill="#ff9a3a" />
    <path d="M47 4c-8 5-11 12-9 20 9-1 18 7 18 16-1 8-7 14-15 15 14 4 27-5 27-19 0-11-8-14-13-20-4-4-7-8-8-12z" fill="#ffd348" opacity=".8" />
  </Icon>
);

const Chrome = () => (
  <Icon id="chrome" bg="#fbfaf8">
    <circle cx="38.500" cy="38.500" r="33" fill="#f3be42" />
    <path d="M9.900 22A33 33 0 0 0 38.500 71.500L52.800 46.800 38.500 38.500 24.200 46.800z" fill="#50a255" />
    <path d="M9.900 22L24.200 46.800 38.500 38.500V22z" fill="#50a255" /><path d="M9.900 22A33 33 0 0 1 67 22H38.500a16 16 0 0 0-15 22z" fill="#d94f3e" />
    <path d="M67 22H38.500L52.800 46.800 38.500 71.500A33 33 0 0 0 67 22z" fill="#f3be42" />
    <circle cx="38.500" cy="38.500" r="16.500" fill="#fff" /><circle cx="38.500" cy="38.500" r="13" fill="#4a83ee" />
  </Icon>
);

const VsCode = () => (
  <Icon id="vscode" bg="#ffffff">
    <path d="M51 11.500L11 48.500l5 5q1 1 2.500 0L51 28z" fill="#2768ad" />
    <path d="M51 65.500L11 28.500l5-5q1-1 2.500 0L51 49z" fill="#2f7cc9" />
    <path d="M51 11.500L65 18v41l-14 6.500z" fill="#4a9cec" />
  </Icon>
);

const AppleTv = () => (
  <span className="flex h-[77px] w-[77px] shrink-0 items-center rounded-[17px] bg-linear-to-b from-[#2c3835] to-[#0b0f12] pl-[10px] text-[#f4f4f4] drop-shadow-[0_2px_2px_rgba(0,0,0,0.25)]">
    <FaApple className="mb-[3px] h-[30px] w-[25px] shrink-0" />
    <span className="ml-[1px] text-[32px] font-medium leading-none tracking-[-1px]">tv</span>
  </span>
);

const Music = () => (
  <Icon id="music" from="#f0637a" to="#e6393f">
    <path d="M30 58V21l25-6.500V51" fill="none" stroke="#fff" strokeWidth="3.500" strokeLinejoin="round" />
    <path d="M30 19l25-6v12l-25 6z" fill="#fff" /><ellipse cx="22.500" cy="58" rx="8" ry="6" fill="#fff" transform="rotate(-15 22.500 58)" /><ellipse cx="47.500" cy="52" rx="8" ry="6" fill="#fff" transform="rotate(-15 47.500 52)" />
  </Icon>
);

const Podcasts = () => (
  <Icon id="podcasts" from="#bb68e8" to="#6b28ab">
    <g fill="none" stroke="#fff" strokeWidth="3.200" strokeLinecap="round">
      <path d="M26 59.500a26 26 0 1 1 25 0" /><path d="M27 48.500a17 17 0 1 1 23 0" />
    </g>
    <circle cx="38.500" cy="34.500" r="6.200" fill="#fff" /><path d="M38.500 43c4.500 0 6.500 2 6.300 6l-1.500 15q-.8 4-4.800 4t-4.800-4L32.200 49c-.2-4 1.800-6 6.300-6z" fill="#fff" />
  </Icon>
);

const AppStore = () => (
  <Icon id="appstore" from="#52b1f2" to="#2761dc">
    <g stroke="#fff" strokeWidth="6" strokeLinecap="round"><path d="M42 17L26 45M34.500 17L57 58M14.500 47.500H44M54 47.500h8.500M21.500 55.500l-2 3.500" /></g>
  </Icon>
);

const Settings = () => (
  <Icon id="settings" from="#d9e2e6" to="#8b8b8b">
    <circle cx="38.500" cy="38.500" r="33" fill="#2b2b2b" />
    <circle cx="38.500" cy="38.500" r="30" fill="none" stroke="#8b8b8b" strokeWidth="4" strokeDasharray="1.500 1.500" />
    <circle cx="38.500" cy="38.500" r="26" fill="#4b4b4b" stroke="#9c9c9c" strokeWidth="4" />
    <circle cx="38.500" cy="38.500" r="17" fill="none" stroke="#8a8a8a" strokeWidth="3.500" />
    <circle cx="38.500" cy="38.500" r="14" fill="#333" />
    <path d="M38.500 38.500H64M38.500 38.500L26 61M38.500 38.500L26 16" stroke="#a8a8a8" strokeWidth="3.500" />
    <circle cx="38.500" cy="38.500" r="4" fill="#555" />
  </Icon>
);

const Skype = () => (
  <svg width="88" height="90" viewBox="0 0 88 90" className="shrink-0 drop-shadow-[0_2px_2px_rgba(0,0,0,0.25)]">
    <g fill="#3079b0"><circle cx="25" cy="25" r="25" /><circle cx="63" cy="65" r="25" /><circle cx="44" cy="45" r="41" /></g>
    <g fill="#fff"><circle cx="26" cy="26" r="19" /><circle cx="62" cy="64" r="19" /><circle cx="44" cy="45" r="35" /></g>
    <path d="M59 31q-4-8-15-8-13 0-13 9 0 6 12 9 17 3.500 17 13 0 12-16 12-14 0-17-10" fill="none" stroke="#3079b0" strokeWidth="10" strokeLinecap="round" />
  </svg>
);

const TeamViewer = () => (
  <Icon id="teamviewer" bg="#04094f">
    <circle cx="38.500" cy="38.500" r="31.500" fill="#fff" />
    <path d="M12.500 38.500l19-11v6.500h14v-6.500l19 11-19 11V43h-14v6.500z" fill="#04094f" />
  </Icon>
);

const Acrobat = () => (
  <Icon id="acrobat" bg="#a32517">
    <path d="M36 17c4-2 5 3 3 10-4 14-12 27-19 33-4 2-5-2-1-6 7-7 22-11 35-11 9 0 8 6 1 6C45 49 34 32 34 21q0-3 2-4z" fill="none" stroke="#fff" strokeWidth="3.500" />
  </Icon>
);

const FinderThumb = () => (
  <svg width="92" height="84" viewBox="0 0 92 84" className="shrink-0">
    <rect x="1" width="89" height="79" fill="#fff" /><rect x="1" width="17" height="79" fill="#e9e9ea" /><rect x="1" width="89" height="5" fill="#f0f0f0" />
    <circle cx="4.500" cy="2.500" r="1" fill="#e55" /><circle cx="7" cy="2.500" r="1" fill="#eb3" /><circle cx="9.500" cy="2.500" r="1" fill="#5b5" />
    <path d="M4 9h5M4 12h8M4 15h7M4 18h8M4 21h6M4 27h8M4 30h6M4 33h8M4 39h6M4 45h8M4 48h7M4 51h6M4 54h8M4 57h6M4 63h8" stroke="#cfcfd1" />
    <path d="M42 10h5M53 10h5M64 10h5" stroke="#444" strokeWidth="3" opacity=".8" /><path d="M31 10h5M74 10h5" stroke="#bbb" strokeWidth="3" />
    <path d="M30 14.500h50M30 16.500h50" stroke="#a9a9a9" strokeWidth="1.200" strokeDasharray="8 3" />
    <svg x="60" y="54" width="29" height="29" viewBox="0 0 77 77"><rect width="77" height="77" rx="17" fill="#46a0f6" /><path d="M43 0C37 14 33 28 32.500 45H44q0 16 4.500 32H60a17 17 0 0 0 17-17V17A17 17 0 0 0 60 0z" fill="#e6ebf3" /><path d="M20.500 22v7M57 22v7M15 52q23.500 18 47 0" fill="none" stroke="#141c2c" strokeWidth="4" /></svg>
  </svg>
);

const Trash = () => (
  <svg width="70" height="92" viewBox="0 0 70 92" className="shrink-0">
    <defs><linearGradient id="bin" x1="0" y1="0" x2="1" y2="0"><stop offset="0" stopColor="#c9c9c9" /><stop offset=".3" stopColor="#e6e6e6" /><stop offset=".7" stopColor="#dcdcdc" /><stop offset="1" stopColor="#c0c0c0" /></linearGradient></defs>
    <path d="M1 14q34 22 68 0l-8 68q-1 8-26 8T9 82z" fill="url(#bin)" />
    <ellipse cx="35" cy="14" rx="34" ry="9" fill="#a9a9a9" />
    <path d="M7 14L14 3l9-1 8 8 9-10 8 10 8-6 6 12-14 8H20z" fill="#f1f1f1" />
    <path d="M14 12l8-4 6 8-8 4zM30 12l5-4 6 6-5 7zM43 13l6-5 4 7-6 4z" fill="#555c66" /><path d="M20 14l6-3 3 5zM36 12l5 1-2 5z" fill="#e2703a" /><path d="M26 7l8 1-3 5z" fill="#4eb8d8" />
    <path d="M1 14q34 20 68 0" fill="none" stroke="#f3f3f3" strokeWidth="1.500" />
  </svg>
);

const Badge = ({ children }) => (
  <span className="absolute -right-[12px] -top-[10px] flex h-[37px] w-[37px] items-center justify-center rounded-full bg-[#e65544] text-[20px] font-medium text-white shadow-[0_1px_3px_rgba(0,0,0,0.4)]">{children}</span>
);

const dockMain = [
  { c: <Finder />, dot: true }, { c: <Launchpad /> }, { c: <Messages /> }, { c: <Mail />, dot: true, badge: "7" }, { c: <Maps /> }, { c: <Photos /> },
  { c: <FaceTime /> }, { c: <Calendar /> }, { c: <Contacts /> }, { c: <Reminders /> }, { c: <Notes />, dot: true }, { c: <SafariIcon />, dot: true },
  { c: <Firefox />, dot: true }, { c: <Chrome />, dot: true }, { c: <VsCode /> }, { c: <AppleTv /> }, { c: <Music /> }, { c: <Podcasts /> },
  { c: <AppStore /> }, { c: <Settings />, badge: "2" },
];

const DockItem = ({ c, dot, badge, className = "w-[77px]" }) => (
  <div className={`relative flex h-full shrink-0 flex-col items-center ${className}`}>
    <div className="mt-[2px] flex h-[108px] items-center justify-center py-[3px]">
      <div className="relative flex">{c}{badge && <Badge>{badge}</Badge>}</div>
    </div>
    {dot && <span className="mt-[2px] h-[8px] w-[8px] rounded-full bg-[#402715]" />}
  </div>
);

function Dock() {
  return (
    <div className="absolute left-[86px] top-[1664px] flex h-[127px] w-[2708px] items-start rounded-[38px] border-2 border-[#c9b5a3] bg-linear-to-r from-[#bda593] via-[#b8a38c] to-[#c2ab9b] pl-[17px] shadow-[0_0_4px_rgba(0,0,0,0.35)]">
      <div className="flex h-full gap-[27.100px]">
        {dockMain.map((d, i) => <DockItem key={i} {...d} />)}
      </div>
      <span className="ml-[38px] mt-[14px] h-[94px] w-[2px] shrink-0 bg-[#8a7666]" />
      <DockItem c={<Skype />} dot className="ml-[27px] w-[88px]" />
      <DockItem c={<TeamViewer />} dot className="ml-[22px] w-[78px]" />
      <DockItem c={<Acrobat />} dot className="ml-[26px] w-[78px]" />
      <span className="ml-[37px] mt-[14px] h-[94px] w-[2px] shrink-0 bg-[#8a7666]" />
      <DockItem c={<FinderThumb />} className="ml-[28px] w-[92px]" />
      <DockItem c={<Trash />} className="ml-[22px] w-[70px]" />
    </div>
  );
}

/* ---------- desktop ---------- */

const Carpet = () => (
  <svg width="2880" height="1800" className="absolute inset-0">
    <defs>
      <filter id="fur" x="0" y="0" width="100%" height="100%">
        <feTurbulence type="fractalNoise" baseFrequency="0.075 0.085" numOctaves="3" seed="7" />
        <feColorMatrix values="1 0.5 0 0 -0.26  0.96 0.5 0 0 -0.3  0.9 0.5 0 0 -0.33  0 0 0 0 1" />
      </filter>
      <linearGradient id="shade" x1="0" y1="0" x2="0" y2="1"><stop offset="0" stopColor="#000" stopOpacity=".6" /><stop offset=".3" stopColor="#000" stopOpacity=".35" /><stop offset="1" stopColor="#000" stopOpacity="0" /></linearGradient>
    </defs>
    <rect width="2880" height="1800" fill="#3a2c1f" />
    <rect y="1600" width="2880" height="200" filter="url(#fur)" />
    <rect y="1640" width="2880" height="130" fill="url(#shade)" />
    <rect x="0" y="1500" width="1402" height="158" rx="14" fill="#7e7e7e" />
    <rect x="48" y="1650" width="434" height="8" fill="#3d4a2c" />
    <path d="M130 1655h60M230 1655h70M380 1655h30" stroke="#8a7e78" strokeWidth="5" /><path d="M350 1655h24M420 1655h50" stroke="#12202a" strokeWidth="6" />
    <rect x="1540" y="1500" width="1340" height="156" rx="18" fill="#3c3c3e" />
  </svg>
);

export default function App() {
  return (
    <div className="relative h-[1800px] w-[2880px] overflow-hidden bg-[#3a2c1f] font-['Inter',sans-serif]">
      <Carpet />
      <div className="relative flex h-[1652px] flex-col">
        <MenuBar />
        <div className="mt-[2px] flex min-h-0 flex-1 flex-col overflow-hidden rounded-t-[20px] rounded-b-[20px] border-l-2 border-[#8e8e8c] bg-[#f5f5f3]">
          <SafariToolbar />
          <TabBar />
          <FigmaToolbar />
          <div className="relative flex min-h-0 flex-1">
            <LeftPanel />
            <Canvas />
            <RightPanel />
            <div className="pointer-events-none absolute inset-x-0 bottom-0 h-[76px] bg-linear-to-b from-transparent to-black/10 mask-[linear-gradient(to_right,transparent,black_200px,black_2680px,transparent)]" />
            <span className="absolute bottom-[48px] right-[48px] flex h-[64px] w-[64px] items-center justify-center rounded-full bg-[#1e1e1e]">
              <svg width="20" height="28" viewBox="0 0 20 28" fill="none" stroke="#fff" strokeWidth="2.200"><path d="M1.500 9a8.500 8 0 1 1 12 6.500q-3.500 2-3.500 5" /><circle cx="10" cy="26" r="1.400" fill="#fff" stroke="none" /></svg>
            </span>
          </div>
        </div>
      </div>
      <Dock />
    </div>
  );
}
